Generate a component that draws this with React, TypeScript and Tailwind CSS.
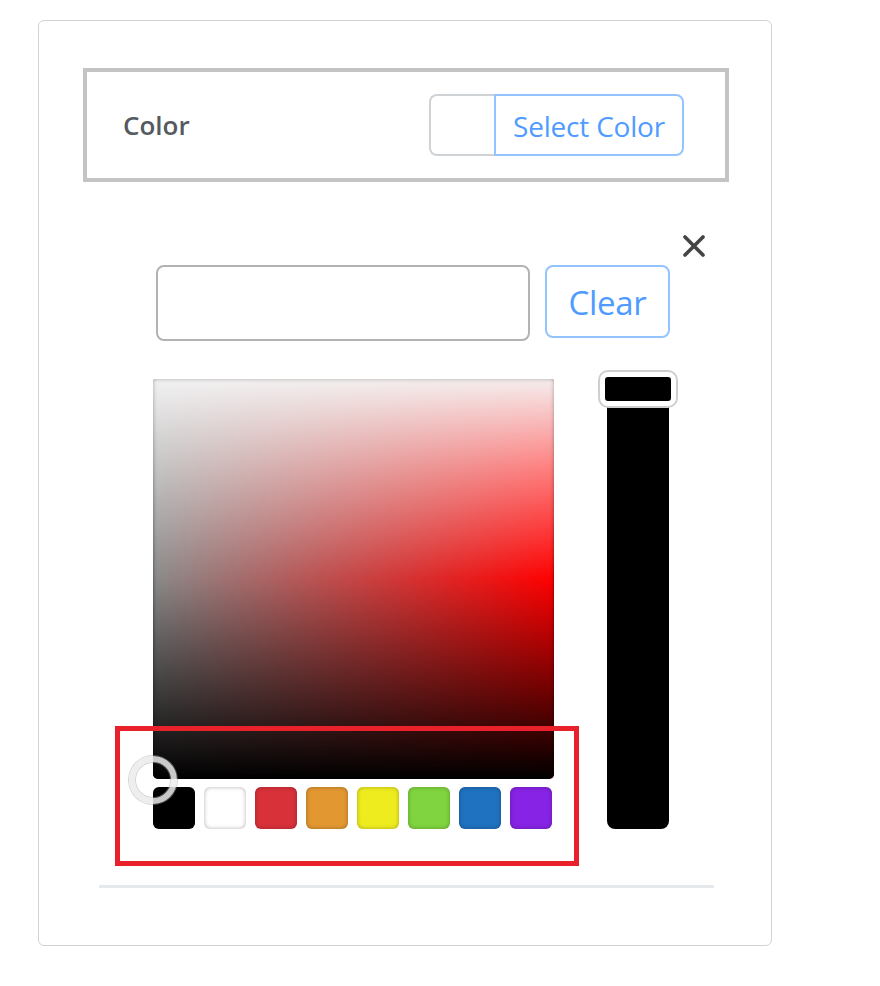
const swatches = ['#000000', '#ffffff', '#d8313a', '#e29731', '#eeec1f', '#7fd43f', '#1f72c0', '#8723e4']

export default function App() {
  return (
    <div className="min-h-[986px] bg-white pl-[38px] pt-[20px] font-['Open_Sans',sans-serif]">
      <div className="h-[926px] w-[734px] rounded-[6px] border border-[#d3d3d3] pl-[44px] pt-[47px]">
        {/* trigger row */}
        <div className="flex h-[114px] w-[646px] items-center justify-between border-4 border-[#c4c4c4] pl-[36px] pr-[41px]">
          <span className="text-[26px] font-semibold text-[#555a60]">Color</span>
          <div className="flex h-[62px]">
            <div className="w-[65px] rounded-l-[8px] border-2 border-r-0 border-[#d0d3d6] bg-white" />
            <button
              type="button"
              className="flex w-[190px] items-center justify-center rounded-r-[8px] border-2 border-[#93c4ff] bg-white pt-[2px] text-[28px] tracking-[-0.2px] text-[#4f9bff]"
            >
              Select Color
            </button>
          </div>
        </div>

        {/* picker */}
        <div className="relative w-[646px]">
          <svg
            className="absolute left-[599px] top-[52px] h-[24px] w-[24px]"
            viewBox="0 0 24 24"
            fill="none"
            stroke="#444"
            strokeWidth="3.6"
            strokeLinecap="round"
          >
            <path d="M3 3L21 21M21 3L3 21" />
          </svg>

          <div className="ml-[73px] flex gap-[15px] pt-[83px]">
            <input className="h-[76px] w-[374px] rounded-[8px] border-2 border-[#b3b3b3] bg-white outline-none" />
            <button
              type="button"
              className="h-[73px] w-[125px] rounded-[8px] border-2 border-[#93c4ff] bg-white pt-[2px] text-[33px] tracking-[-0.3px] text-[#4f9bff]"
            >
              Clear
            </button>
          </div>

          <div className="relative ml-[70px] mt-[31px] flex items-start">
            <div className="pt-[7px]">
              <div className="relative h-[400px] w-[401px] overflow-hidden rounded-b-[5px] rounded-t-[3px] bg-[linear-gradient(to_right,#8a8a8a,#ff0000)] shadow-[inset_0_0_3px_rgba(0,0,0,0.35)]">
                <div className="absolute inset-0 bg-[linear-gradient(to_bottom,rgba(245,245,245,0.97)_0%,rgba(255,255,255,0.5)_22%,rgba(255,255,255,0)_50%,rgba(0,0,0,0)_50%,#000_100%)] shadow-[inset_0_0_4px_rgba(0,0,0,0.3)]" />
              </div>
              <div className="mt-[8px] flex gap-[9px]">
                {swatches.map((c) => (
                  <div
                    key={c}
                    className="h-[42px] w-[42px] rounded-[6px] shadow-[inset_0_0_4px_rgba(0,0,0,0.3)]"
                    style={{ backgroundColor: c }}
                  />
                ))}
              </div>
            </div>

            <div className="relative ml-[46px] flex w-[76px] flex-col items-center">
              <div className="mt-[2px] h-[455px] w-[62px] rounded-b-[8px] rounded-t-[4px] bg-black" />
              <div className="absolute left-0 top-0 h-[34px] w-[76px] rounded-[8px] border-[5px] border-white bg-black shadow-[0_0_0_2px_#cfcfcf]" />
            </div>

            {/* picker handle */}
            <div className="absolute left-[-24px] top-[384px] h-[48px] w-[48px] rounded-full border-[6px] border-[rgba(235,235,235,0.85)] shadow-[0_0_0_1px_rgba(160,160,160,0.45),inset_0_0_0_1px_rgba(160,160,160,0.45)]" />

            {/* highlight */}
            <div className="absolute left-[-38px] top-[354px] h-[140px] w-[464px] border-[5px] border-[#e8212b]" />
          </div>

          <div className="ml-[16px] mt-[56px] h-[3px] w-[615px] bg-[#e6e9ec]" />
        </div>
      </div>
    </div>
  )
}
